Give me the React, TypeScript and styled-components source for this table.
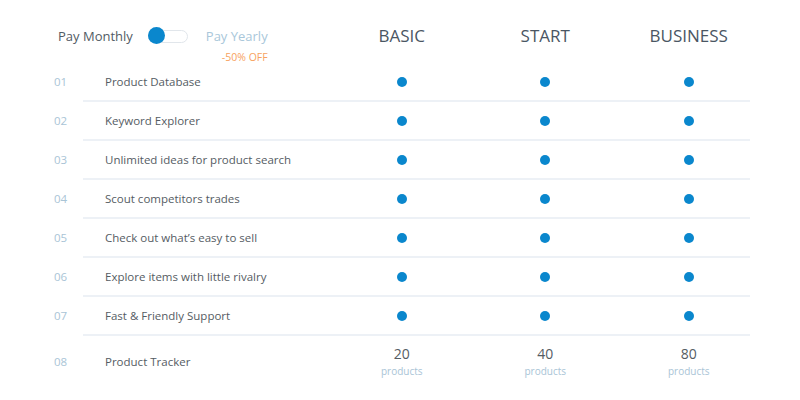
import React from "react";
import styled, { createGlobalStyle } from "styled-components";

const GlobalStyle = createGlobalStyle`
  body {
    margin: 0;
    background: #fff;
    font-family: "Open Sans", "Liberation Sans", sans-serif;
  }
`;

const COLS = "51px 225px repeat(3, 143.5px)";

const Page = styled.div`
  width: 800px;
  height: 400px;
  padding-left: 54px;
  box-sizing: border-box;
`;

const HeaderRow = styled.div`
  display: grid;
  grid-template-columns: ${COLS};
  height: 63px;
  padding-top: 26px;
  box-sizing: border-box;
`;

const Switcher = styled.div`
  grid-column: span 2;
  display: flex;
  align-items: flex-start;
  padding-left: 4px;
`;

const SwitchLabel = styled.span<{ $active?: boolean }>`
  font-size: 13px;
  line-height: 20px;
  color: ${(p) => (p.$active ? "#525b64" : "#a9c7da")};
`;

const Track = styled.div`
  position: relative;
  width: 38px;
  height: 11px;
  margin: 4px 18px 0 15px;
  border: 1px solid #e1e6eb;
  border-radius: 7px;
`;

const Knob = styled.span`
  position: absolute;
  left: -1px;
  top: -4px;
  width: 17px;
  height: 17px;
  border-radius: 50%;
  background: #0a87cd;
`;

const Yearly = styled.div`
  display: flex;
  flex-direction: column;
  align-items: flex-end;
`;

const Discount = styled.span`
  font-size: 10.5px;
  line-height: 14px;
  margin-top: 4px;
  color: #f7a25e;
`;

const PlanTitle = styled.div`
  text-align: center;
  font-size: 17px;
  line-height: 20px;
  color: #4a5663;
  text-transform: uppercase;
`;

const Row = styled.div<{ $tall?: boolean }>`
  display: grid;
  grid-template-columns: ${COLS};
  align-items: center;
  height: ${(p) => (p.$tall ? "50px" : "37px")};
`;

const Num = styled.span`
  font-size: 11.5px;
  color: #a9c4d6;
`;

const Feature = styled.span`
  font-size: 11.5px;
  color: #555c63;
`;

const Cell = styled.div`
  display: flex;
  flex-direction: column;
  align-items: center;
`;

const Dot = styled.span`
  width: 10px;
  height: 10px;
  border-radius: 50%;
  background: #0a87cd;
`;

const Amount = styled.span`
  font-size: 14px;
  line-height: 18px;
  color: #555c63;
`;

const Unit = styled.span`
  font-size: 10px;
  line-height: 14px;
  margin-top: 1px;
  color: #a9c4d6;
`;

const Divider = styled.div`
  margin-left: 29px;
  width: 667px;
  height: 2px;
  background: #edf1f6;
`;

const features = [
  "Product Database",
  "Keyword Explorer",
  "Unlimited ideas for product search",
  "Scout competitors trades",
  "Check out what\u2019s easy to sell",
  "Explore items with little rivalry",
  "Fast & Friendly Support",
];

const plans = ["Basic", "Start", "Business"];
const tracker = [20, 40, 80];

export default function App() {
  return (
    <Page>
      <GlobalStyle />
      <HeaderRow>
        <Switcher>
          <SwitchLabel $active>Pay Monthly</SwitchLabel>
          <Track>
            <Knob />
          </Track>
          <Yearly>
            <SwitchLabel>Pay Yearly</SwitchLabel>
            <Discount>-50% OFF</Discount>
          </Yearly>
        </Switcher>
        {plans.map((p) => (
          <PlanTitle key={p}>{p}</PlanTitle>
        ))}
      </HeaderRow>
      {features.map((f, i) => (
        <React.Fragment key={f}>
          <Row>
            <Num>{`0${i + 1}`}</Num>
            <Feature>{f}</Feature>
            {plans.map((p) => (
              <Cell key={p}>
                <Dot />
              </Cell>
            ))}
          </Row>
          <Divider />
        </React.Fragment>
      ))}
      <Row $tall>
        <Num>08</Num>
        <Feature>Product Tracker</Feature>
        {tracker.map((n) => (
          <Cell key={n}>
            <Amount>{n}</Amount>
            <Unit>products</Unit>
          </Cell>
        ))}
      </Row>
    </Page>
  );
}
